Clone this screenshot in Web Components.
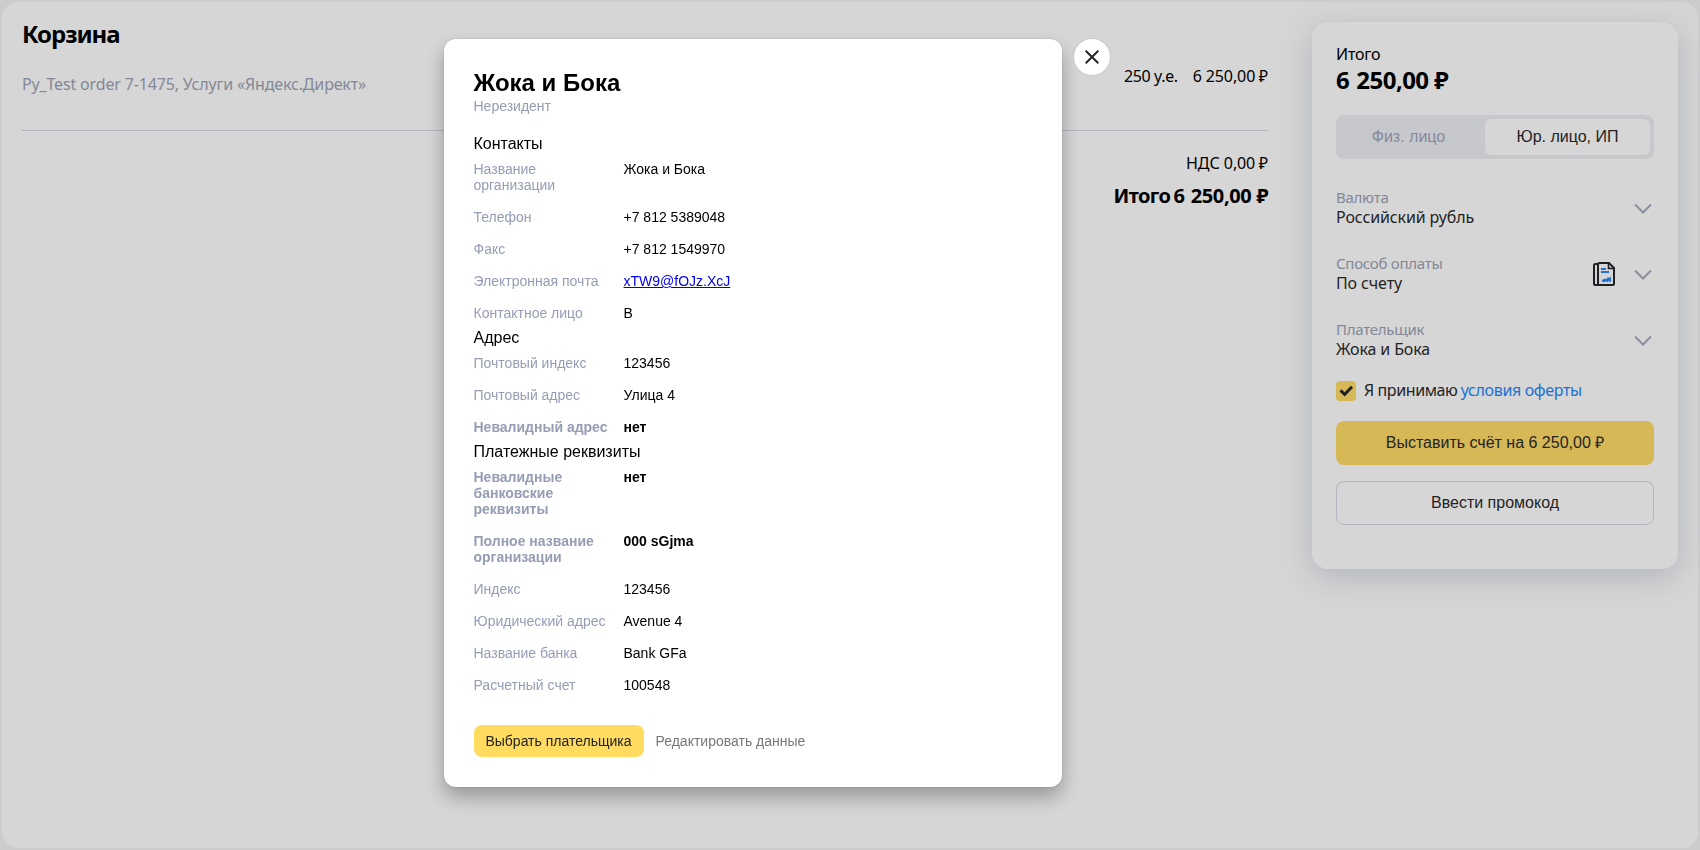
<!DOCTYPE html>
<html lang="ru">
<head>
<meta charset="utf-8">
<title>Корзина</title>
<style>
html,body{margin:0;height:100%;overflow:hidden}
body{background:#f3f4f6;font:16px/20px "Noto Sans",sans-serif;color:#000}
</style>
</head>
<body>
<cart-page></cart-page>

<script>
const define = (name, html, setup) => {
  const tpl = document.createElement('template');
  tpl.innerHTML = html;
  customElements.define(name, class extends HTMLElement {
    connectedCallback() {
      if (this.shadowRoot) return;
      const root = this.attachShadow({ mode: 'open' });
      root.append(tpl.content.cloneNode(true));
      if (setup) setup(this, root);
    }
  });
};

define('money-amount', `
<style>
:host{display:inline-block;white-space:nowrap;letter-spacing:-.1px}
:host([bold]){font-weight:700;letter-spacing:-.4px;word-spacing:1px}
i{font-style:normal;margin-left:-.03em}
:host([bold]) i{margin-left:-.06em}
</style><slot></slot> <i>₽</i>`);

define('segment-switch', `
<style>
:host{display:flex;height:44px;box-sizing:border-box;padding:4px 4px 4px 0;border-radius:8px;background:#eeeff4;font:16px/36px "Liberation Sans",sans-serif;text-align:center}
.off{width:145px;margin-right:4px;color:#9ea5b8}
.on{flex:1;border-radius:6px;background:#fff;color:#2b2b2b}
</style>
<div class="off"><slot name="off"></slot></div><div class="on"><slot name="on"></slot></div>`);

define('select-field', `
<style>
:host{display:flex;align-items:center;height:40px;color:#2b2b2b;letter-spacing:-.12px}
.text{flex:1;white-space:nowrap}
.label{font-size:15px;color:#9ca3b5;letter-spacing:-.26px}
.chevron{margin:4px 2px 0 19px}
</style>
<div class="text"><div class="label"></div><slot></slot></div>
<slot name="icon"></slot>
<svg class="chevron" width="18" height="12" viewBox="0 0 18 12" fill="none" stroke="#a6acbd" stroke-width="2"><path d="M1 1.5 9 9.5l8-8"/></svg>`,
(el, root) => { root.querySelector('.label').textContent = el.getAttribute('label'); });

define('invoice-icon', `
<style>:host{display:block;width:22px;height:24px;margin-top:2px}svg{display:block}</style>
<svg width="22" height="24" viewBox="0 0 22 24" fill="none">
<path d="M5 2H2.500Q1 2 1 3.500V21.500Q1 23 2.500 23H19.500Q21 23 21 21.500V6L16 1H6.500Q5 1 5 2.500V23" stroke="#26272b" stroke-width="2"/>
<path d="M15.500 1v5.500H21" stroke="#26272b" stroke-width="1.600"/>
<path d="M8 6h5v2H8zM8 9h8v2H8zM9 20v-2l3-1.500 1 .8 2-2.300 1 .9 2-1.400V20h-1.600v-1.800L15 20h-1.600v-1.200L12 20z" fill="#2588fa"/>
</svg>`);

define('check-box', `
<style>
:host{display:flex;gap:8px;height:20px;color:#2b2b2b;white-space:nowrap;letter-spacing:-.4px}
.box{width:20px;height:20px;border-radius:4px;background:#ffdc68}
svg{display:block}
.text{margin-top:-1px}
</style>
<div class="box"><svg width="20" height="20" viewBox="0 0 20 20" fill="none" stroke="#26272b" stroke-width="3"><path d="M4.500 9.300 8.700 13.300 16 5.800"/></svg></div>
<div class="text"><slot></slot></div>`);

define('wide-button', `
<style>
:host{display:block;height:44px;box-sizing:border-box;border-radius:8px;background:#ffdc68;color:#2b2b2b;text-align:center;font:16px/44px "Liberation Sans",sans-serif}
:host([outline]){border:1px solid #d6d6e2;background:none;line-height:42px}
</style><slot></slot>`);

define('order-summary', `
<style>
:host{display:block;box-sizing:border-box;width:366px;height:547px;padding:22px 24px 44px;border-radius:16px;background:#fff;box-shadow:0 8px 32px rgba(80,95,130,.26)}
.caption{letter-spacing:-.2px}
money-amount{display:block;font-size:24px;line-height:31px;letter-spacing:-.55px;word-spacing:1.500px}
segment-switch{margin:20px 0 28px}
.fields{display:grid;gap:26px}
check-box{margin:22px 0 20px}
.link{color:#2588fa;margin-left:-.5px;letter-spacing:-.36px}
.buttons{display:grid;gap:16px}
</style>
<div class="caption">Итого</div>
<money-amount bold>6&nbsp;250,00</money-amount>
<segment-switch><span slot="off">Физ. лицо</span><span slot="on">Юр. лицо, ИП</span></segment-switch>
<div class="fields">
<select-field label="Валюта">Российский рубль</select-field>
<select-field label="Способ оплаты">По счету<invoice-icon slot="icon"></invoice-icon></select-field>
<select-field label="Плательщик">Жока и Бока</select-field>
</div>
<check-box>Я принимаю <span class="link">условия оферты</span></check-box>
<div class="buttons">
<wide-button>Выставить счёт на 6&nbsp;250,00&nbsp;₽</wide-button>
<wide-button outline>Ввести промокод</wide-button>
</div>`);

define('order-list', `
<style>
:host{display:block}
h1{margin:0;font-size:24px;line-height:24px;font-weight:700;letter-spacing:-1.05px}
.row{display:flex;height:84px;border-bottom:1px solid #d6d6e2}
.name{flex:1;padding-top:28px;color:#9ca3b5;letter-spacing:-.16px}
.qty{padding-top:20px;margin-right:15px;letter-spacing:-.35px}
.row money-amount{padding-top:20px}
.totals{display:grid;gap:11px;margin-top:22px;text-align:right}
.total{font-size:20px;line-height:24px;font-weight:700;letter-spacing:-.6px;word-spacing:-1.500px}
.total money-amount{word-spacing:1.500px}
</style>
<h1>Корзина</h1>
<div class="row"><div class="name">Py_Test order 7-1475, Услуги «Яндекс.Директ»</div><div class="qty">250 у.е.</div><money-amount>6&nbsp;250,00</money-amount></div>
<div class="totals"><div>НДС <money-amount>0,00</money-amount></div><div class="total">Итого <money-amount bold>6&nbsp;250,00</money-amount></div></div>`);

define('detail-row', `
<style>
:host{display:grid;grid-template-columns:138px 1fr;column-gap:12px;font-size:14px;line-height:16px}
:host([bold]){font-weight:700}
.label{color:#959db5}
</style><div class="label"></div><div><slot></slot></div>`,
(el, root) => { root.querySelector('.label').textContent = el.getAttribute('label'); });

define('detail-section', `
<style>
:host{display:block}
h2{margin:0;padding:8px 0;font-size:16px;line-height:18px;font-weight:400}
.rows{display:grid;gap:16px}
</style><h2></h2><div class="rows"><slot></slot></div>`,
(el, root) => { root.querySelector('h2').textContent = el.getAttribute('heading'); });

define('payer-dialog', `
<style>
:host{display:block;box-sizing:border-box;width:618px;height:748px;padding:30px 30px 30px 29.5px;border-radius:12px;background:#fff;color:#000;font:14px/16px "Liberation Sans",sans-serif;box-shadow:0 0 0 1px rgba(0,0,0,.06),0 10px 20px rgba(0,0,0,.3)}
h1{margin:0 0 2px;font-size:24px;line-height:27px;font-weight:700}
.kind{color:#959db5;margin-bottom:13px}
a{color:#00e;text-decoration:underline}
.actions{display:flex;gap:12px;margin-top:32px;line-height:32px;color:#777}
.primary{box-sizing:border-box;width:170px;text-align:center;border-radius:8px;background:#ffdb60;color:#222}
</style>
<h1>Жока и Бока</h1>
<div class="kind">Нерезидент</div>
<detail-section heading="Контакты">
<detail-row label="Название организации">Жока и Бока</detail-row>
<detail-row label="Телефон">+7 812 5389048</detail-row>
<detail-row label="Факс">+7 812 1549970</detail-row>
<detail-row label="Электронная почта"><a>xTW9@fOJz.XcJ</a></detail-row>
<detail-row label="Контактное лицо">В</detail-row>
</detail-section>
<detail-section heading="Адрес">
<detail-row label="Почтовый индекс">123456</detail-row>
<detail-row label="Почтовый адрес">Улица 4</detail-row>
<detail-row bold label="Невалидный адрес">нет</detail-row>
</detail-section>
<detail-section heading="Платежные реквизиты">
<detail-row bold label="Невалидные банковские реквизиты">нет</detail-row>
<detail-row bold label="Полное название организации">000 sGjma</detail-row>
<detail-row label="Индекс">123456</detail-row>
<detail-row label="Юридический адрес">Avenue 4</detail-row>
<detail-row label="Название банка">Bank GFa</detail-row>
<detail-row label="Расчетный счет">100548</detail-row>
</detail-section>
<div class="actions"><div class="primary">Выбрать плательщика</div><div>Редактировать данные</div></div>`);

define('close-button', `
<style>
:host{display:grid;place-items:center;width:36px;height:36px;border-radius:50%;background:#fff;box-shadow:0 0 2px rgba(0,0,0,.2)}
svg{display:block}
</style>
<svg width="14" height="14" viewBox="0 0 14 14" fill="none" stroke="#26272b" stroke-width="2"><path d="M.7.700 13.300 13.300M13.300.700.700 13.300"/></svg>`);

define('modal-overlay', `
<style>
:host{position:fixed;inset:0;display:flex;align-items:flex-start;gap:12px;box-sizing:border-box;padding:39px 0 0 444px;background:rgba(0,0,0,.16)}
</style><slot></slot>`);

define('cart-page', `
<style>
:host{display:block;box-sizing:border-box;height:850px;padding:2px}
main{display:grid;grid-template-columns:1246px 366px;column-gap:44px;align-items:start;box-sizing:border-box;height:846px;padding:20px;border-radius:16px;background:#fff}
</style>
<main><order-list></order-list><order-summary></order-summary></main>
<modal-overlay><payer-dialog></payer-dialog><close-button></close-button></modal-overlay>`);
</script>
</body>
</html>
